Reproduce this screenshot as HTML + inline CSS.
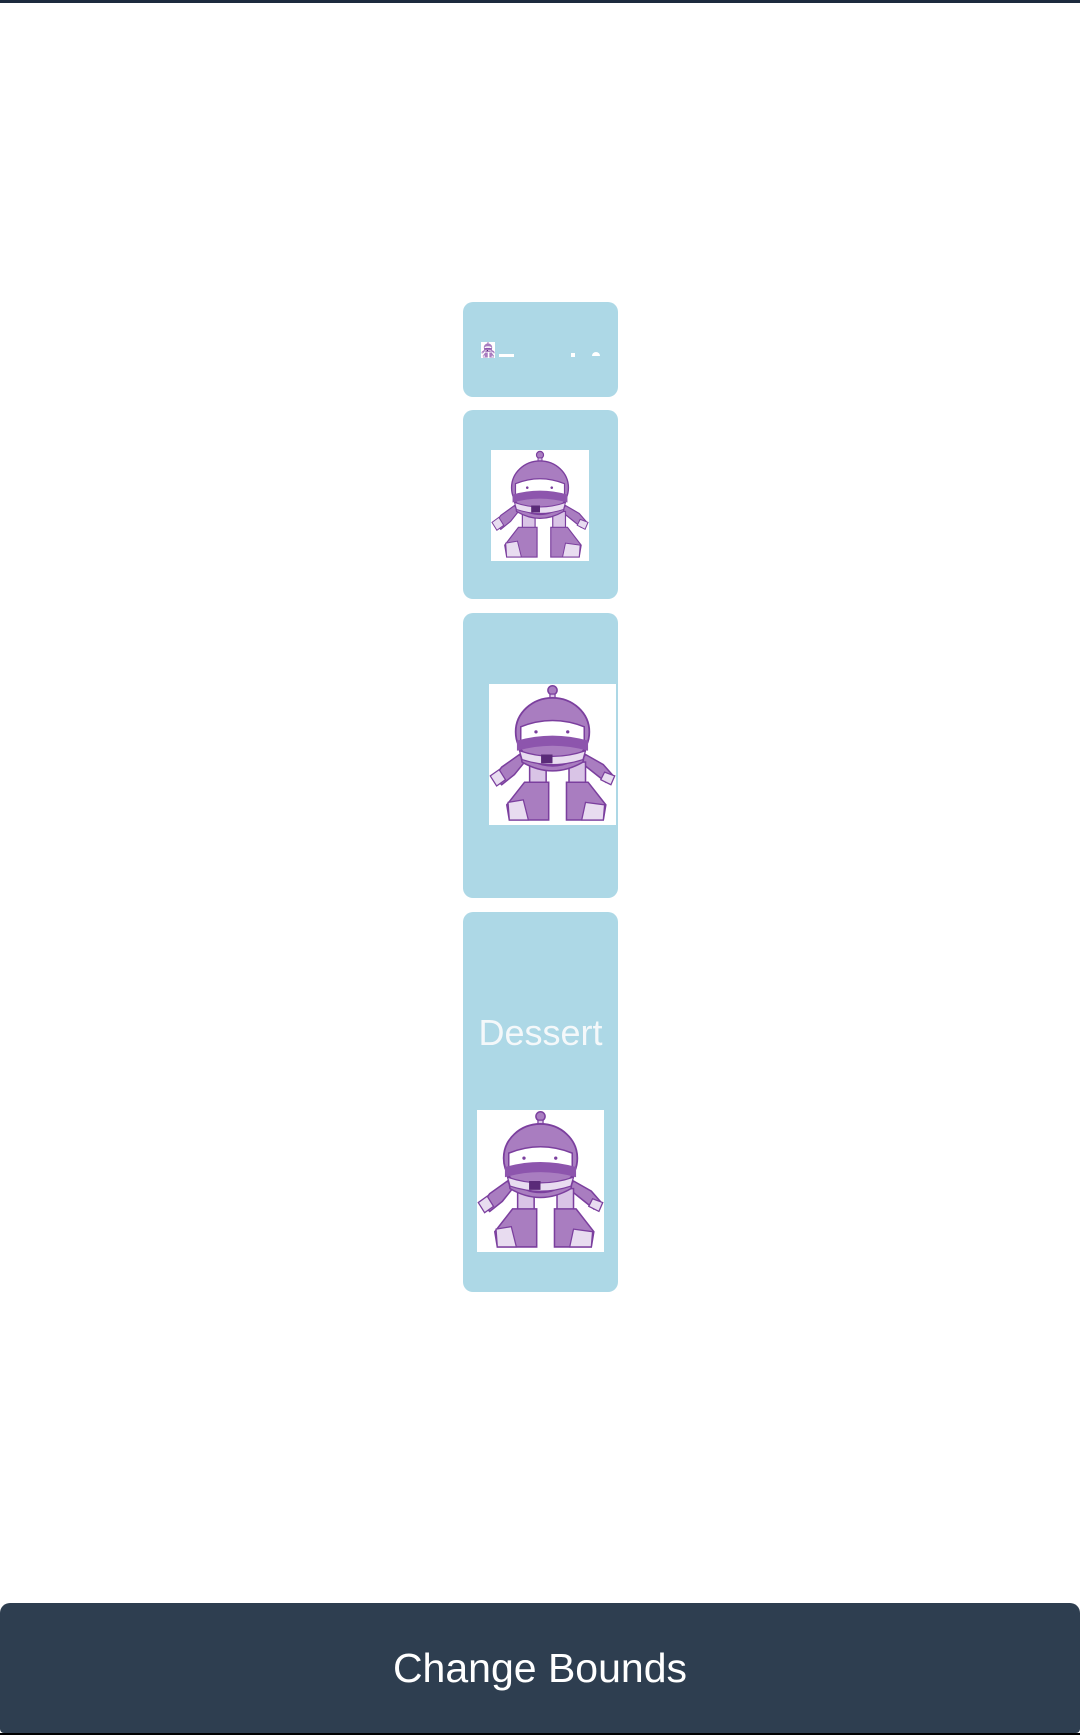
<!DOCTYPE html>
<html><head><meta charset="utf-8"><style>
html,body{margin:0;padding:0;background:#fff;}
body{width:1080px;height:1735px;position:relative;overflow:hidden;font-family:"Liberation Sans",sans-serif;}
.top{position:absolute;left:0;top:0;width:1080px;height:3px;background:#1c2a3e;}
.card{position:absolute;left:463px;width:155px;background:#add8e6;border-radius:10px;}
.img{position:absolute;background:#fff;}
.img svg{width:100%;height:100%;display:block;}
.btn{position:absolute;left:0;top:1603px;width:1080px;height:130px;background:#2e3e50;border-radius:10px 10px 4px 4px;color:#fff;font-size:41px;text-align:center;line-height:130px;}
.bot{position:absolute;left:0;top:1733px;width:1080px;height:2px;background:#000;}
.w{position:absolute;background:#fff;}
</style></head><body>
<div class="top"></div>
<svg width="0" height="0" style="position:absolute">
<defs>
<g id="r">
<circle cx="50" cy="5" r="3.6" fill="#a97dc0" stroke="#7b3f9e" stroke-width="1.2"/>
<rect x="48" y="8" width="4" height="6" fill="#d9c4e6" stroke="#7b3f9e" stroke-width="1"/>
<path d="M24 56 L10 66 L4 74 L10 80 L20 72 L28 62Z" fill="#a97dc0" stroke="#7b3f9e" stroke-width="1.2"/>
<path d="M76 56 L90 64 L97 72 L92 78 L82 70 L72 62Z" fill="#a97dc0" stroke="#7b3f9e" stroke-width="1.2"/>
<path d="M1 73 L8 68 L13 76 L6 81Z" fill="#e8dcf0" stroke="#7b3f9e" stroke-width="1"/>
<path d="M91 70 L99 73 L96 80 L88 76Z" fill="#e8dcf0" stroke="#7b3f9e" stroke-width="1"/>
<rect x="32" y="62" width="13" height="24" fill="#d9c4e6" stroke="#7b3f9e" stroke-width="1.2"/>
<rect x="63" y="62" width="13" height="24" fill="#d9c4e6" stroke="#7b3f9e" stroke-width="1.2"/>
<path d="M28 78 L47 78 L47 108 L16 108 L14 96Z" fill="#a97dc0" stroke="#7b3f9e" stroke-width="1.2"/>
<path d="M15 94 L27 92 L31 108 L16 108Z" fill="#e8dcf0" stroke="#7b3f9e" stroke-width="1"/>
<path d="M61 78 L78 78 L92 96 L90 108 L61 108Z" fill="#a97dc0" stroke="#7b3f9e" stroke-width="1.2"/>
<path d="M76 94 L91 96 L90 108 L73 108Z" fill="#e8dcf0" stroke="#7b3f9e" stroke-width="1"/>
<path d="M24 50 Q50 74 76 50 L74 62 Q50 76 26 62Z" fill="#a97dc0" stroke="#7b3f9e" stroke-width="1.2"/>
<ellipse cx="50" cy="38" rx="29" ry="27" fill="#a97dc0" stroke="#7b3f9e" stroke-width="1.4"/>
<path d="M25 34 Q50 24 75 34 L75 46 Q50 40 25 46Z" fill="#fff" stroke="#7b3f9e" stroke-width="1.2"/>
<path d="M22 45 Q50 37 78 45 L78 53 Q50 45 22 53Z" fill="#8d55ad"/>
<path d="M24 53 Q50 62 76 53 L74 60 Q50 68 26 60Z" fill="#e8dcf0" stroke="#7b3f9e" stroke-width="1"/>
<rect x="41" y="56" width="9" height="7" fill="#5a2a78"/>
<circle cx="37" cy="38" r="1.3" fill="#7b3f9e"/><circle cx="62" cy="38" r="1.3" fill="#7b3f9e"/>
</g></defs></svg>

<div class="card" style="top:302px;height:95px;"></div>
<div class="img" style="left:481px;top:342px;width:14px;height:16px;"><svg viewBox="0 0 100 112" preserveAspectRatio="none"><use href="#r"/></svg></div>
<div class="w" style="left:499px;top:354px;width:15px;height:3px;"></div>
<div class="w" style="left:571px;top:353px;width:4px;height:4px;"></div>
<div class="w" style="left:592px;top:352px;width:8px;height:4px;border-radius:4px 4px 0 0;"></div>

<div class="card" style="top:410px;height:189px;"></div>
<div class="img" style="left:491px;top:450px;width:98px;height:111px;"><svg viewBox="0 0 100 112" preserveAspectRatio="none"><use href="#r"/></svg></div>

<div class="card" style="top:613px;height:285px;"></div>
<div class="img" style="left:489px;top:684px;width:127px;height:141px;"><svg viewBox="0 0 100 112" preserveAspectRatio="none"><use href="#r"/></svg></div>

<div class="card" style="top:912px;height:380px;"></div>
<div style="position:absolute;left:463px;width:155px;top:1012px;text-align:center;color:#f4f8fa;font-size:36px;line-height:42px;">Dessert</div>
<div class="img" style="left:477px;top:1110px;width:127px;height:142px;"><svg viewBox="0 0 100 112" preserveAspectRatio="none"><use href="#r"/></svg></div>

<div class="btn">Change Bounds</div>
<div class="bot"></div>
</body></html>
